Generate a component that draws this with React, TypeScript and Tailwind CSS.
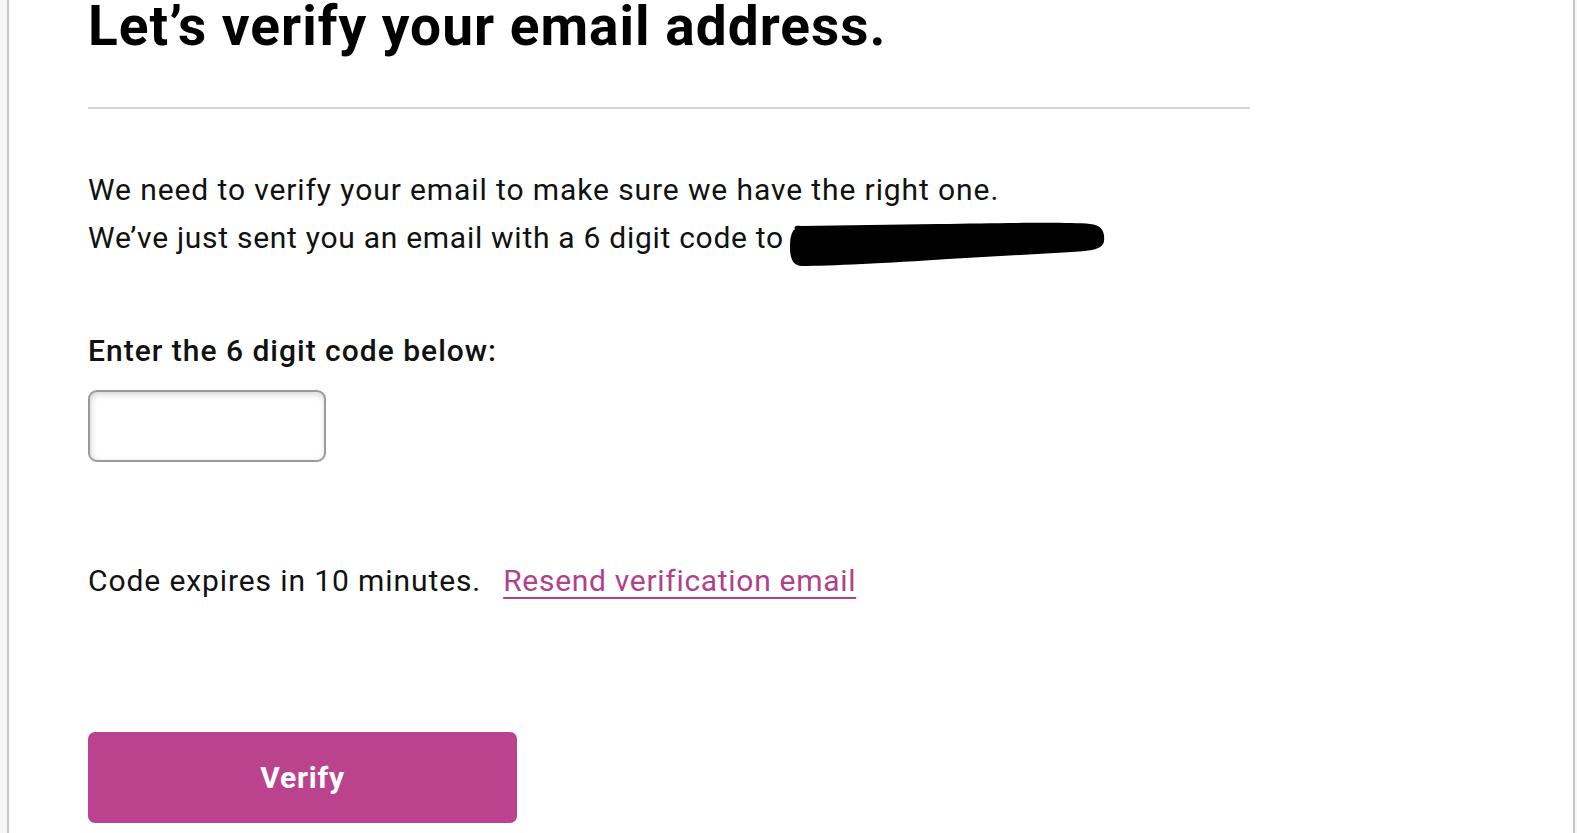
export default function App() {
  return (
    <div className="min-h-screen w-full bg-[#f7f7f7] flex" style={{ fontFamily: 'Roboto, "Liberation Sans", sans-serif' }}>
      <div className="ml-[7px] mr-[2px] flex-1 bg-white border-x-2 border-[#c8c8c8] min-h-[833px] overflow-hidden">
        <div className="pl-[79px]">
          {/* Heading */}
          <h1 className="text-[55px] leading-[52px] font-bold text-black tracking-[1px]">
            Let’s verify your email address.
          </h1>

          <hr className="mt-[55px] w-[1162px] border-0 h-[2px] bg-[#d4d4d4]" />

          {/* Intro text */}
          <div className="mt-[57px] text-[30px] leading-[48px] text-[#111]">
            <p className="tracking-[0.9px]">We need to verify your email to make sure we have the right one.</p>
            <p className="flex h-[48px] items-start tracking-[0.72px]">
              <span>We’ve just sent you an email with a 6 digit code to</span>
              <svg className="ml-[4px] mt-[6px] shrink-0" width="318" height="48" viewBox="0 0 318 48">
                <path
                  d="M7 9 C 5 6 9 5 13 6 L 150 4 C 220 3 280 2 302 4 C 314 5 317 12 316 21 C 315 29 304 31 284 32 L 160 39 C 100 43 40 46 14 46 C 5 46 2 38 2 28 C 2 19 3 12 7 9 Z"
                  fill="#000"
                />
              </svg>
            </p>
          </div>

          {/* Code input */}
          <div className="mt-[73px]">
            <label className="block text-[30px] leading-[32px] font-medium text-[#111] tracking-[1px]">
              Enter the 6 digit code below:
            </label>
            <input
              type="text"
              className="mt-[23px] block w-[238px] h-[72px] rounded-[9px] border-2 border-[#9a9a9a] bg-white shadow-[inset_1px_2px_6px_rgba(0,0,0,0.18)] outline-none"
            />
          </div>

          {/* Expiry */}
          <div className="mt-[99px] flex items-baseline text-[30px] leading-[40px] text-[#111]">
            <span className="tracking-[0.9px]">Code expires in 10 minutes.</span>
            <a href="#" className="ml-[22px] text-[#b0418b] underline underline-offset-[6px] decoration-[2px] tracking-[0.7px]">
              Resend verification email
            </a>
          </div>

          {/* Verify button */}
          <button className="mt-[131px] w-[429px] h-[91px] rounded-[7px] bg-[#bb438e] text-white text-[30px] font-bold tracking-[0.8px]">
            Verify
          </button>
        </div>
      </div>
    </div>
  )
}
